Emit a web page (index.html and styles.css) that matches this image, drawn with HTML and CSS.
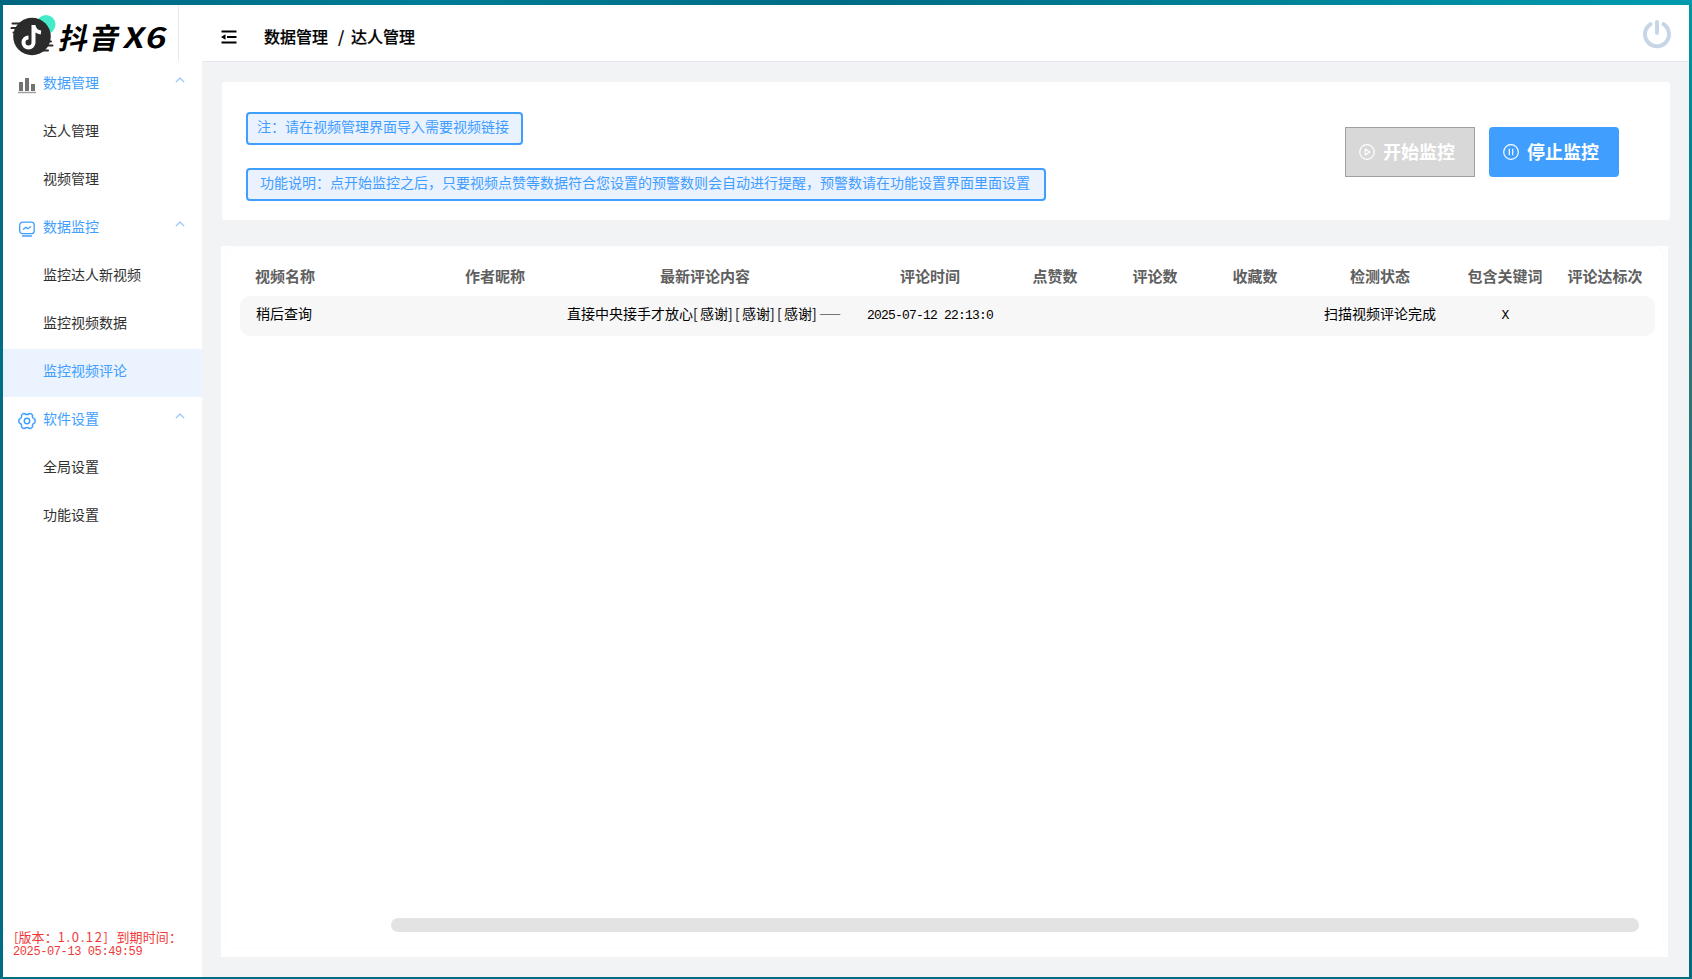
FILE: index.html
```html
<!DOCTYPE html>
<html lang="zh">
<head>
    <meta charset="UTF-8">
    <meta name="viewport" content="width=device-width, initial-scale=1.0">
    <title>抖音 X6</title>
    <link rel="stylesheet" href="styles.css">
</head>
<body>
    <div class="app">
        <aside class="sidebar">
            <div class="logo">
                <svg width="175" height="56" viewBox="0 0 175 56">
                    <circle cx="43" cy="19.500" r="9.500" fill="#45ebc9"/>
                    <circle cx="29" cy="31.500" r="18.800" fill="#2b2b2b"/>
                    <path d="M9.500 18.500h10M8.500 23h8M10.500 27.500h5M43 36.500h5M42 40.500h7.500M38 45.500h7" stroke="#2b2b2b" stroke-width="2" stroke-linecap="round"/>
                    <path d="M30.500 20v17.500a5 5 0 1 1-5-5M30.500 20.500c.8 4.500 3.500 6.500 7.500 7" fill="none" stroke="#fff" stroke-width="4"/>
                    <g class="logo-text" transform="translate(0 43) skewX(-12)">
                        <text x="54.500" y="0.500" font-size="29" textLength="60" lengthAdjust="spacing">抖音</text>
                        <text x="119" y="0" font-size="28" textLength="21" lengthAdjust="spacingAndGlyphs">X</text>
                        <text x="141" y="0" font-size="28" textLength="21" lengthAdjust="spacingAndGlyphs">6</text>
                    </g>
                </svg>
            </div>
            <ul class="menu">
                <li class="group">
                    <svg class="icon" width="18" height="18" viewBox="0 0 18 18">
                        <path d="M1 6h4v9H1zM7 2h4v13H7zM13 8h4v7h-4z" fill="#737373"/>
                        <path d="M0 16.500h18" stroke="#a0a0a0" stroke-width="1.500"/>
                    </svg>
                    <span>数据管理</span>
                    <svg class="arrow" width="10" height="6" viewBox="0 0 10 6"><path d="M.8 5.200 5 1l4.200 4.200"/></svg>
                </li>
                <li>达人管理</li>
                <li>视频管理</li>
                <li class="group">
                    <svg class="icon" width="18" height="18" viewBox="0 0 18 18" fill="none" stroke="#409eff" stroke-width="1.300" stroke-linecap="round">
                        <rect x="1.700" y="2.200" width="14.500" height="11.500" rx="3"/>
                        <path d="M5.500 9.300l2.300-2 2 1.500 2.700-2M4.500 16h9"/>
                    </svg>
                    <span>数据监控</span>
                    <svg class="arrow" width="10" height="6" viewBox="0 0 10 6"><path d="M.8 5.200 5 1l4.200 4.200"/></svg>
                </li>
                <li>监控达人新视频</li>
                <li>监控视频数据</li>
                <li class="active">监控视频评论</li>
                <li class="group">
                    <svg class="icon" width="18" height="18" viewBox="0 0 18 18" fill="none" stroke="#409eff" stroke-width="1.500" stroke-linejoin="round">
                        <path d="M5.200 1.700q1.200-.6 1.900.3 1.900 1 3.800 0 .7-.9 1.900-.3l1.200.8q.9.6.4 1.600-.1 2 1.600 2.600 1.100.2 1.100 1.300v2q0 1.100-1.100 1.300-1.700.6-1.600 2.600.5 1-.4 1.600l-1.200.8q-1.200.6-1.900-.3-1.900-1-3.800 0-.7.9-1.900.3L4 15.500q-.9-.6-.4-1.600.1-2-1.600-2.600-1.100-.2-1.100-1.300V8q0-1.100 1.100-1.300 1.700-.6 1.600-2.600Q3.100 3.100 4 2.500z"/>
                        <circle cx="9" cy="9" r="2.700"/>
                    </svg>
                    <span>软件设置</span>
                    <svg class="arrow" width="10" height="6" viewBox="0 0 10 6"><path d="M.8 5.200 5 1l4.200 4.200"/></svg>
                </li>
                <li>全局设置</li>
                <li>功能设置</li>
            </ul>
            <div class="version">
                <div class="version-line">[版本：<span class="num">1.0.12]</span> 到期时间：</div>
                <div class="expire-line">2025-07-13 05:49:59</div>
            </div>
        </aside>

        <main class="main">
            <header class="header">
                <svg width="16" height="14" viewBox="0 0 16 14">
                    <path d="M.5 1.500h15M6 7h9.500M.5 12.500h15" stroke="#000" stroke-width="2"/>
                    <path d="M0 7l4.500-2.800v5.600z"/>
                </svg>
                <div class="crumb"><span>数据管理</span><span class="slash">/</span><span>达人管理</span></div>
                <svg class="power" width="30" height="30" viewBox="0 0 30 30" fill="none" stroke="#c6d6e7" stroke-width="4" stroke-linecap="round">
                    <path d="M8.500 5.200a12 12 0 1 0 13 0M15 3v11"/>
                </svg>
            </header>

            <section class="panel">
                <div class="notes">
                    <div class="note">注：请在视频管理界面导入需要视频链接</div>
                    <div class="note note-long">功能说明：点开始监控之后，只要视频点赞等数据符合您设置的预警数则会自动进行提醒，预警数请在功能设置界面里面设置</div>
                </div>
                <div class="buttons">
                    <button class="btn btn-disabled">
                        <svg width="16" height="16" viewBox="0 0 16 16" fill="none" stroke="#fff" stroke-width="1.200">
                            <circle cx="8" cy="8" r="7.300"/>
                            <path d="M6.200 5v6l4.600-3z" stroke-linejoin="round"/>
                        </svg>
                        <span>开始监控</span>
                    </button>
                    <button class="btn">
                        <svg width="16" height="16" viewBox="0 0 16 16" fill="none" stroke="#fff" stroke-width="1.200">
                            <circle cx="8" cy="8" r="7.300"/>
                            <path d="M6.300 4.800v6.400M9.700 4.800v6.400"/>
                        </svg>
                        <span>停止监控</span>
                    </button>
                </div>
            </section>

            <section class="table-card">
                <div class="table-inner">
                    <div class="row thead">
                        <div class="left">视频名称</div>
                        <div>作者昵称</div>
                        <div>最新评论内容</div>
                        <div>评论时间</div>
                        <div>点赞数</div>
                        <div>评论数</div>
                        <div>收藏数</div>
                        <div>检测状态</div>
                        <div>包含关键词</div>
                        <div>评论达标次</div>
                    </div>
                    <div class="row tbody">
                        <div class="left name">稍后查询</div>
                        <div></div>
                        <div class="comment">直接中央接手才放心<i>[</i>感谢<i>]</i><i>[</i>感谢<i>]</i><i>[</i>感谢<i>]</i><span class="dash">——</span></div>
                        <div class="mono">2025-07-12 22:13:0</div>
                        <div></div>
                        <div></div>
                        <div></div>
                        <div>扫描视频评论完成</div>
                        <div class="mono">X</div>
                        <div></div>
                    </div>
                    <div class="scrollbar"></div>
                </div>
            </section>
        </main>
    </div>
</body>
</html>
```

FILE: styles.css
```css
* {
    box-sizing: border-box;
}

body {
    margin: 0;
    height: 979px;
    padding: 5px 3px 2px;
    font-family: "Noto Sans CJK SC", sans-serif;
    font-size: 14px;
    background: linear-gradient(to right, #006680 0%, #007c96 25%, #006b84 50%, #008298 75%, #009bb0 100%) top / 100% 5px no-repeat,
        linear-gradient(to bottom, #0097a8 0%, #008496 15%, #2d7477 40%, #00758a 70%, #006b80 100%) right / 3px 100% no-repeat,
        #006e85;
    overflow: hidden;
}

.app {
    display: flex;
    height: 972px;
    background-color: #f1f3f5;
}

/* 左侧菜单 */
.sidebar {
    width: 199px;
    flex-shrink: 0;
    background-color: #fff;
    display: flex;
    flex-direction: column;
}

.logo {
    width: 176px;
    height: 56px;
    border-right: 1px solid #e8eaf0;
}

.logo svg {
    display: block;
}

.logo-text {
    font-weight: 700;
    fill: #000;
}

.menu {
    list-style: none;
    margin: 0;
    padding: 0;
}

.menu li {
    height: 48px;
    padding: 0 14px 6px 40px;
    display: flex;
    align-items: center;
    color: #303030;
}

.menu li.group {
    padding-left: 15px;
    color: #409eff;
}

.menu li.active {
    background-color: #ebf3ff;
    color: #409eff;
}

.icon {
    margin: 5px 7px 0 0;
}

.arrow {
    margin: -5px 3px 0 auto;
    fill: none;
    stroke: #8cc4ff;
    stroke-width: 1.2;
}

.version {
    margin-top: auto;
    padding: 0 0 17px 10px;
    font-size: 13px;
    line-height: 14px;
    color: #f03a3a;
    white-space: nowrap;
}

.version-line {
    padding-left: 1px;
    letter-spacing: 0.1px;
}

.num {
    margin-right: 4px;
    letter-spacing: 1.6px;
}

.expire-line {
    padding-top: 1px;
    font-family: "Liberation Mono", monospace;
    font-size: 12px;
    line-height: 15px;
    letter-spacing: -0.4px;
}

/* 右侧内容 */
.main {
    flex: 1;
    min-width: 0;
}

.header {
    height: 57px;
    padding: 0 17px 0 19px;
    display: flex;
    align-items: center;
    background-color: #fff;
    border-bottom: 1px solid #e6e7ee;
}

.header svg {
    margin-top: 8px;
}

.crumb {
    display: flex;
    margin: 6px 0 0 27px;
    font-size: 16px;
    font-weight: 500;
    color: #000;
    -webkit-text-stroke: 0.2px #000;
}

.slash {
    width: 23px;
    padding-left: 10px;
}

.header .power {
    margin: 2px 0 0 auto;
}

.panel {
    margin: 20px 19px 0 20px;
    height: 138px;
    padding: 30px 51px 0 24px;
    display: flex;
    justify-content: space-between;
    background-color: #fff;
    border-radius: 3px;
}

.note {
    width: 277px;
    height: 33px;
    margin-bottom: 23px;
    padding-left: 9px;
    line-height: 24px;
    background-color: #eaf1ff;
    border: 2px solid #409eff;
    border-radius: 4px;
    color: #409eff;
    white-space: nowrap;
}

.note-long {
    width: 800px;
    padding-left: 12px;
}

.buttons {
    display: flex;
    gap: 14px;
    padding-top: 15px;
}

.btn {
    width: 130px;
    height: 50px;
    padding: 0 0 0 14px;
    display: flex;
    align-items: center;
    gap: 8px;
    font-family: inherit;
    font-size: 18px;
    font-weight: bold;
    color: #fff;
    background-color: #409eff;
    border: none;
    border-radius: 4px;
    white-space: nowrap;
}

.btn span {
    margin-top: -2px;
}

.btn-disabled {
    padding-left: 13px;
    background-color: #d8d8d8;
    border: 1px solid #a0a0a0;
    border-radius: 0;
}

/* 表格 */
.table-card {
    margin: 26px 21px 0 19px;
    height: 711px;
    padding: 0 4px 9px;
    background-color: #fff;
}

.table-inner {
    height: 702px;
    padding: 13px 8px 15px 14px;
    display: flex;
    flex-direction: column;
    border: 1px solid #fcfcfc;
    border-radius: 10px;
}

.row {
    display: grid;
    grid-template-columns: 195px 120px 300px 150px 100px 100px 100px 150px 100px 100px;
    align-items: center;
    width: 1415px;
    text-align: center;
    white-space: nowrap;
}

.thead {
    height: 36px;
    padding-bottom: 5px;
    font-size: 15px;
    font-weight: bold;
    color: #606060;
}

.tbody {
    height: 40px;
    padding-bottom: 6px;
    border-radius: 10px;
    background-color: #f7f7f7;
    color: #000;
}

.row .left {
    text-align: left;
    padding-left: 15px;
}

.row .name {
    padding-left: 16px;
}

.row .comment {
    text-align: left;
    padding-left: 12px;
}

.comment i {
    display: inline-block;
    width: 7px;
    font-style: normal;
}

.dash {
    font-size: 11px;
}

.row .mono {
    padding-top: 4px;
    font-family: "Liberation Mono", monospace;
    font-size: 13px;
    letter-spacing: -0.8px;
}

.scrollbar {
    width: 1248px;
    height: 14px;
    margin: auto 24px 0 auto;
    margin-left: 151px;
    border-radius: 7px;
    background-color: #e3e3e3;
}
```
